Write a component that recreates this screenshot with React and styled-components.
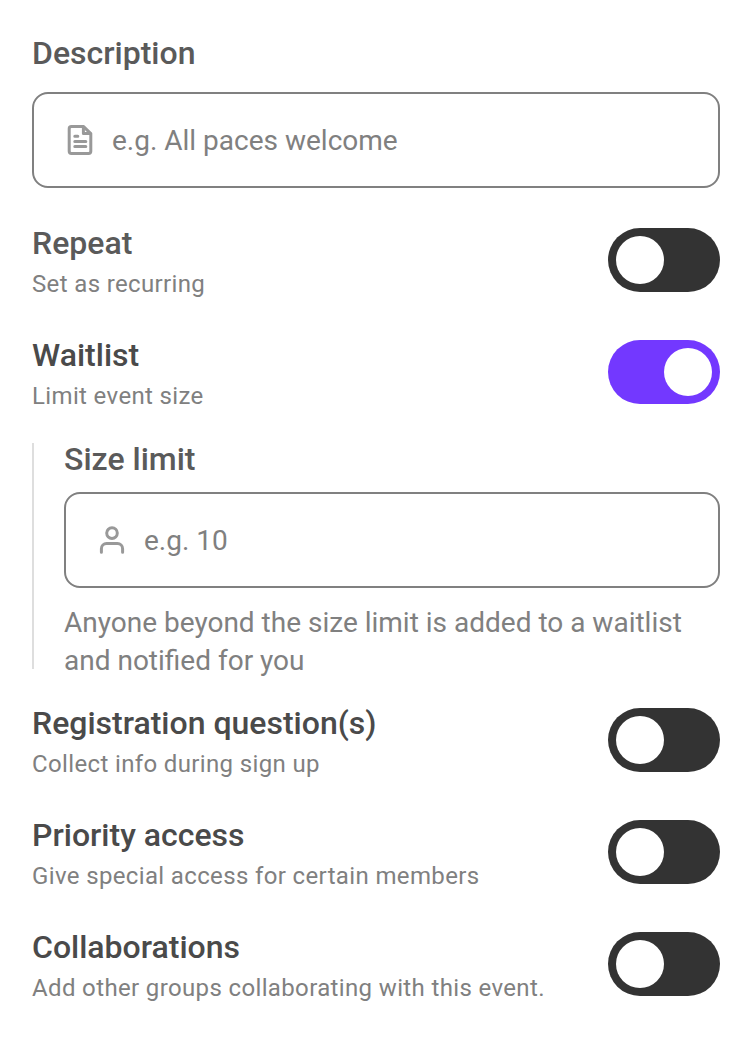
import React, { useState } from "react";
import styled, { createGlobalStyle } from "styled-components";

const GlobalStyle = createGlobalStyle`
  *, *::before, *::after { box-sizing: border-box; }
  body {
    margin: 0;
    background: #fff;
    font-family: Roboto, "Liberation Sans", sans-serif;
  }
`;

const Form = styled.main`
  display: flex;
  flex-direction: column;
  width: 750px;
  height: 1040px;
  padding: 33px 30px 0 32px;
  overflow: hidden;
`;

const Heading = styled.h2`
  margin: 0;
  font-size: 32px;
  line-height: 40px;
  font-weight: 500;
  white-space: nowrap;
  color: ${(p) => (p.$strong ? "#4a4a4a" : "#5a5a5a")};
`;

const Caption = styled.p`
  margin: 5px 0 0;
  font-size: 24px;
  line-height: 32px;
  letter-spacing: 0.36px;
  white-space: nowrap;
  color: #808080;
`;

const Field = styled.label`
  display: flex;
  align-items: center;
  gap: 16px;
  height: 96px;
  margin-top: ${(p) => p.$gap}px;
  padding: 0 30px;
  border: 2px solid #808080;
  border-radius: 16px;
`;

const Icon = styled.svg`
  flex: none;
  width: 32px;
  height: 32px;
  fill: none;
  stroke: #999;
  stroke-width: 3;
  stroke-linecap: round;
  stroke-linejoin: round;
`;

const Input = styled.input`
  flex: 1;
  min-width: 0;
  height: 40px;
  margin: 2px 0 0;
  padding: 0;
  border: 0;
  outline: 0;
  background: transparent;
  font: 400 28px/40px Roboto, "Liberation Sans", sans-serif;
  color: #333;
  &::placeholder { color: #808080; opacity: 1; }
`;

const Rows = styled.section`
  display: flex;
  flex-direction: column;
  gap: 35px;
  margin-top: ${(p) => p.$gap}px;
`;

const Row = styled.div`
  display: flex;
  justify-content: space-between;
  height: 77px;
`;

const Switch = styled.button`
  display: flex;
  flex: none;
  justify-content: ${(p) => (p.$on ? "flex-end" : "flex-start")};
  width: 112px;
  height: 64px;
  margin: 5px 0 0;
  padding: 8px;
  border: 0;
  border-radius: 32px;
  background: ${(p) => (p.$on ? "#7338ff" : "#333")};
  cursor: pointer;
`;

const Knob = styled.span`
  width: 48px;
  height: 48px;
  border-radius: 50%;
  background: #fff;
`;

const Nested = styled.section`
  height: 226px;
  margin-top: 31px;
  padding-left: 30px;
  border-left: 2px solid #dedede;
`;

const NestedHeading = styled(Heading)`
  margin-top: -4px;
`;

const Hint = styled.p`
  margin: 16px 0 0;
  font-size: 28px;
  line-height: 38px;
  color: #808080;
`;

const DocumentIcon = () => (
  <Icon viewBox="0 0 32 32">
    <path d="M19.6 2.6H7.4a2.2 2.2 0 0 0-2.2 2.2v22.4a2.2 2.2 0 0 0 2.2 2.2h17.2a2.2 2.2 0 0 0 2.2-2.2V9.6Z" />
    <path d="M19.4 3v6.6h6.8" />
    <path d="M10.8 12.2h3M10.8 17.4h11M10.8 22.6h11" />
  </Icon>
);

const PersonIcon = () => (
  <Icon viewBox="0 0 32 32">
    <circle cx="16" cy="9.1" r="5.3" />
    <path d="M5.4 28.2v-3.5a5.2 5.2 0 0 1 5.2-5.2h10.8a5.2 5.2 0 0 1 5.2 5.2v3.5" />
  </Icon>
);

function ToggleRow({ title, caption, strong, initial = false }) {
  const [on, setOn] = useState(initial);
  return (
    <Row>
      <div>
        <Heading $strong={strong}>{title}</Heading>
        <Caption>{caption}</Caption>
      </div>
      <Switch $on={on} role="switch" aria-checked={on} aria-label={title} onClick={() => setOn(!on)}>
        <Knob />
      </Switch>
    </Row>
  );
}

export default function App() {
  return (
    <>
      <GlobalStyle />
      <Form>
        <Heading>Description</Heading>
        <Field $gap={19}>
          <DocumentIcon />
          <Input placeholder="e.g. All paces welcome" />
        </Field>
        <Rows $gap={35}>
          <ToggleRow title="Repeat" caption="Set as recurring" />
          <ToggleRow title="Waitlist" caption="Limit event size" strong initial />
        </Rows>
        <Nested>
          <NestedHeading>Size limit</NestedHeading>
          <Field $gap={13}>
            <PersonIcon />
            <Input placeholder="e.g. 10" />
          </Field>
          <Hint>Anyone beyond the size limit is added to a waitlist and notified for you</Hint>
        </Nested>
        <Rows $gap={34}>
          <ToggleRow title="Registration question(s)" caption="Collect info during sign up" strong />
          <ToggleRow title="Priority access" caption="Give special access for certain members" strong />
          <ToggleRow title="Collaborations" caption="Add other groups collaborating with this event." strong />
        </Rows>
      </Form>
    </>
  );
}
